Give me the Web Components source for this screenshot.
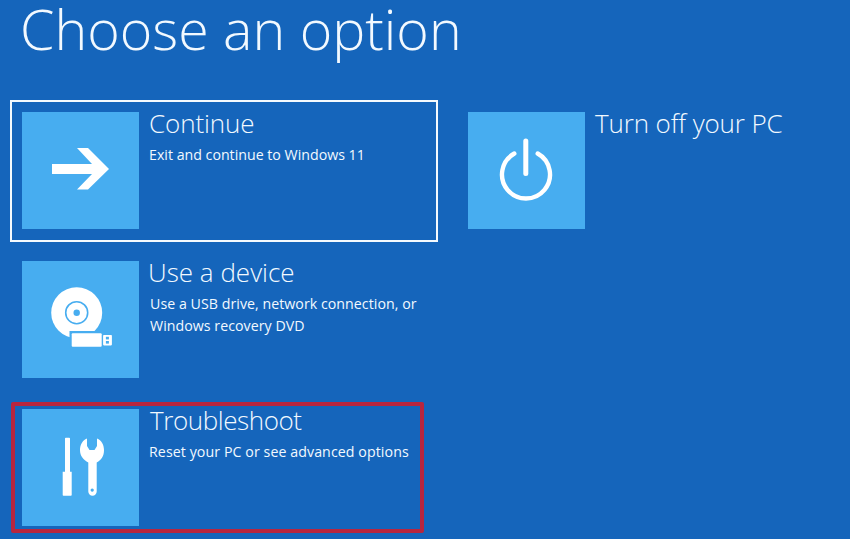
<!DOCTYPE html>
<html><head><meta charset="utf-8"><title>Choose an option</title>
<style>
html,body{margin:0;height:539px;overflow:hidden;background:#1565bb}
</style></head><body>
<recovery-screen heading="Choose an option">
  <div slot="left">
    <option-card state="focus" heading="Continue" text="Exit and continue to Windows 11" style="--ls:-.1px">
      <svg slot="icon" viewBox="0 0 117 117"><path fill="#fff" d="M30 52H70L55 36H66L87 57L66 77.5H55L70 62H30Z"/></svg>
    </option-card>
    <option-card heading="Use a device" text="Use a USB drive, network connection, or&#10;Windows recovery DVD" style="margin-bottom:6px;--tx:-1px;--px:1px;--ps:.04px">
      <svg slot="icon" viewBox="0 0 117 117">
        <circle cx="54.7" cy="51.7" r="25.5" fill="#fff"/>
        <circle cx="54.7" cy="51.7" r="11" fill="none" stroke="#47adf0" stroke-width="1.6"/>
        <circle cx="54.7" cy="51.7" r="3.2" fill="#47adf0"/>
        <rect x="47.5" y="70" width="34.5" height="18" fill="#47adf0"/>
        <rect x="49.7" y="72.3" width="30" height="13.4" rx="1" fill="#fff"/>
        <rect x="81.1" y="74" width="8.8" height="10.4" rx=".8" fill="#fff"/>
        <rect x="83.9" y="75.8" width="3" height="2.6" fill="#47adf0"/>
        <rect x="83.9" y="80" width="3" height="2.6" fill="#47adf0"/>
      </svg>
    </option-card>
    <option-card heading="Troubleshoot" text="Reset your PC or see advanced options" annotated style="--ls:-.42px;--tx:1px;--ps:.08px">
      <svg slot="icon" viewBox="0 0 117 117">
        <path fill="#fff" d="M43 29.5a.8.8 0 0 1 .8-.8h3.4a.8.8 0 0 1 .8.8V62.7h1.7V86a.8.8 0 0 1-.8.8H41.5a.8.8 0 0 1-.8-.8V62.7H43Z"/>
        <path fill="#fff" fill-rule="evenodd" d="M65 29.500V37L67.500 41H72.500L75 37V29.500C79.500 31 82 36 82 41C82 47 79.500 51 74.700 53.500V82.500A4.200 4.200 0 0 1 66.300 82.500V53.500C61.500 51 58 47 58 41C58 36 60.500 31 65 29.500ZM70.200 79.500a1.600 1.600 0 1 0 .01 0Z"/>
      </svg>
    </option-card>
  </div>
  <div slot="right">
    <option-card heading="Turn off your PC" text="" style="--ls:-.13px">
      <svg slot="icon" viewBox="0 0 117 117">
        <path fill="none" stroke="#fff" stroke-width="4.4" stroke-linecap="round" d="M46.300 41.500A24 24 0 1 0 69.700 41.500"/>
        <path fill="none" stroke="#fff" stroke-width="5" stroke-linecap="round" d="M57.800 29V61.500"/>
      </svg>
    </option-card>
  </div>
</recovery-screen>
<script>
class OptionCard extends HTMLElement{
  constructor(){
    super();
    const s=this.attachShadow({mode:'open'});
    s.innerHTML=`<style>
      :host{display:block;position:relative;box-sizing:border-box;width:428px;height:142px;border:2px solid transparent;padding:10px;margin-bottom:7px;color:#f2f9ff}
      :host([state=focus]){border-color:#f4fafe}
      .row{display:flex;gap:10px;align-items:flex-start}
      .tile{flex:none;width:117px;height:117px;background:#47adf0}
      ::slotted(svg){display:block;width:117px;height:117px}
      h2{margin:-8px 0 0 var(--tx,0);font:300 26px/38px "Open Sans",sans-serif;letter-spacing:var(--ls,0);white-space:nowrap}
      p{margin:2px 0 0 var(--px,0);font:400 14.2px/22px "Open Sans",sans-serif;letter-spacing:var(--ps,0);white-space:pre-line}
      .mark{display:none;position:absolute;left:-1px;top:3px;width:404.500px;height:122.500px;border:4px solid #b8263f;border-radius:2px;pointer-events:none}
      :host([annotated]) .mark{display:block}
    </style>
    <div class="row"><div class="tile"><slot name="icon"></slot></div>
    <div class="txt"><h2></h2><p></p></div></div><div class="mark"></div>`;
    s.querySelector('h2').textContent=this.getAttribute('heading');
    s.querySelector('p').textContent=this.getAttribute('text');
  }
}
class RecoveryScreen extends HTMLElement{
  constructor(){
    super();
    const s=this.attachShadow({mode:'open'});
    s.innerHTML=`<style>
      :host{display:block;box-sizing:border-box;height:539px;padding:0 0 0 10px;overflow:hidden;color:#f2f9ff}
      h1{margin:0;padding:0 0 0 10px;height:100px;font:300 55.500px/58px "Open Sans",sans-serif;white-space:nowrap}
      .cols{display:flex;gap:18px;align-items:flex-start}
    </style><h1></h1><div class="cols"><slot name="left"></slot><slot name="right"></slot></div>`;
    s.querySelector('h1').textContent=this.getAttribute('heading');
  }
}
customElements.define('option-card',OptionCard);
customElements.define('recovery-screen',RecoveryScreen);
</script>
</body></html>
